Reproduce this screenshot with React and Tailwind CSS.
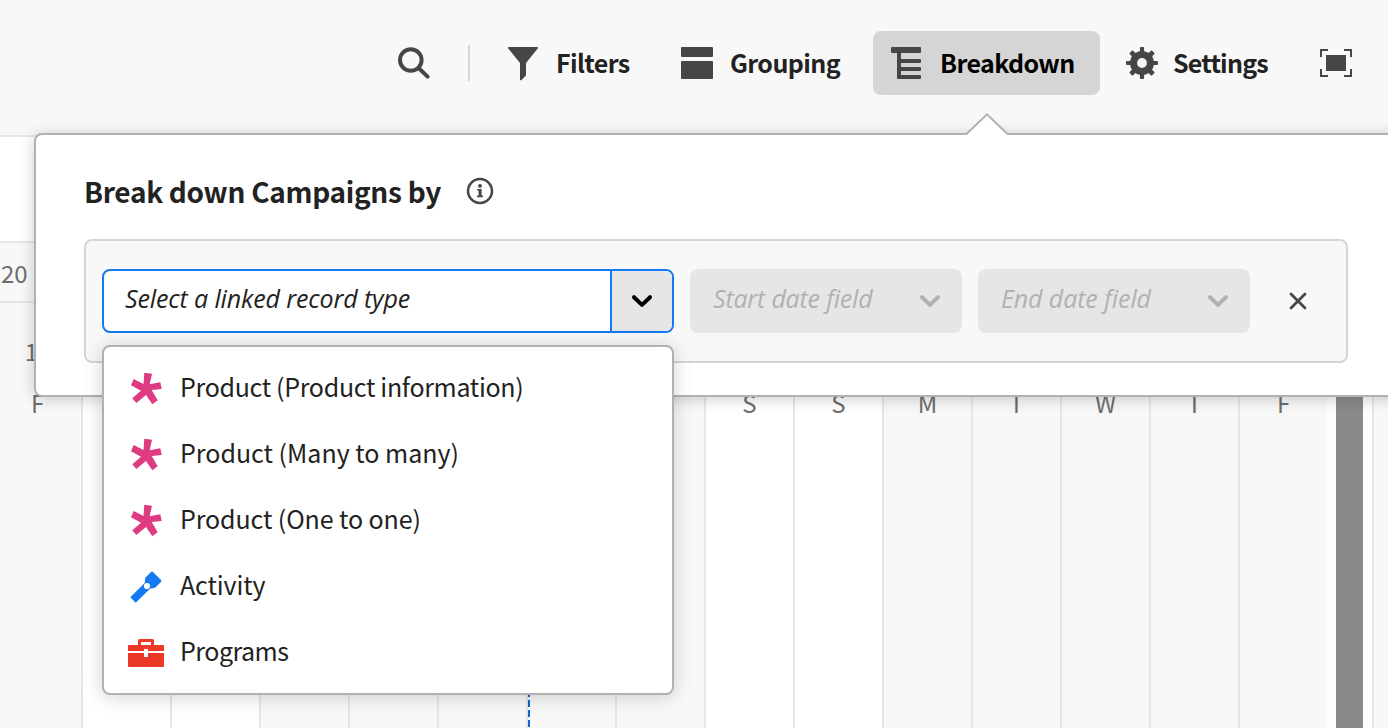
import React from "react";

const SANS = "font-['Noto_Sans_CJK_SC',sans-serif]";
const ITALIC = "font-['Open_Sans',sans-serif] italic";

const days = [
  { d: "F", n: "1" },
  { off: true },
  { off: true },
  {},
  {},
  {},
  { today: true },
  {},
  { d: "S", off: true },
  { d: "S", off: true },
  { d: "M" },
  { d: "T" },
  { d: "W" },
  { d: "T" },
  { d: "F" },
];

function SearchIcon() {
  return (
    <svg width="36" height="36" viewBox="0 0 36 36" fill="none" stroke="#464646" strokeWidth="4" strokeLinecap="round">
      <circle cx="14.8" cy="15" r="10.8" />
      <path d="M22.8 23.2 31.6 31.6" />
    </svg>
  );
}

function FilterIcon() {
  return (
    <svg width="36" height="36" viewBox="0 0 36 36" fill="#464646">
      <path d="M3.7 2H32.3a.8.8 0 0 1 .6 1.3L21 18v12.6l-4.2 4.1a.7.7 0 0 1-1.8-.6V18L3.1 3.3A.8.8 0 0 1 3.7 2Z" />
    </svg>
  );
}

function GroupingIcon() {
  return (
    <svg width="36" height="36" viewBox="0 0 36 36" fill="#464646">
      <rect x="2" y="2" width="32" height="10" rx="1" />
      <rect x="2" y="16" width="32" height="18" rx="1" />
    </svg>
  );
}

function BreakdownIcon() {
  return (
    <svg width="36" height="36" viewBox="0 0 36 36" fill="#464646">
      <rect x="2" y="2" width="30" height="6" rx="1" />
      <path d="M8 7h4v7h19a1 1 0 0 1 1 1v2a1 1 0 0 1-1 1H12v4h19a1 1 0 0 1 1 1v2a1 1 0 0 1-1 1H12v4h19a1 1 0 0 1 1 1v2a1 1 0 0 1-1 1H9a1 1 0 0 1-1-1Z" />
    </svg>
  );
}

function GearIcon() {
  return (
    <svg width="36" height="36" viewBox="0 0 36 36" fill="#464646">
      {[0, 45, 90, 135].map((a) => (
        <rect key={a} x={a % 90 ? 15.6 : 15.9} y={a % 90 ? 2.2 : 2} width={a % 90 ? 4.8 : 4.2} height={a % 90 ? 31.6 : 32} rx="1" transform={`rotate(${a} 18 18)`} />
      ))}
      <circle cx="18" cy="18" r="12" />
      <circle cx="18" cy="18" r="4.9" fill="#f8f8f8" />
    </svg>
  );
}

function FullscreenIcon() {
  return (
    <svg width="36" height="36" viewBox="0 0 36 36">
      <rect x="8" y="10" width="20" height="16" fill="#464646" />
      <path d="M10 5H3v7M26 5h7v7M10 31H3v-7M26 31h7v-7" fill="none" stroke="#464646" strokeWidth="2" />
    </svg>
  );
}

function InfoIcon() {
  return (
    <svg width="28" height="28" viewBox="0 0 28 28" fill="#464646">
      <circle cx="14" cy="14" r="12" fill="none" stroke="#464646" strokeWidth="2.5" />
      <circle cx="14" cy="8.9" r="1.9" />
      <path d="M11.400 12h4.200v6.500h1.300v1.800h-5.800v-1.800h1.500v-4.700h-1.200Z" />
    </svg>
  );
}

function Chevron({ color }) {
  return (
    <svg width="24" height="16" viewBox="0 0 24 16" fill="none" stroke={color} strokeWidth="4" strokeLinecap="round" strokeLinejoin="round">
      <path d="M4 4.2 12 11.9 20 4.2" />
    </svg>
  );
}

function Asterisk() {
  return (
    <svg width="36" height="36" viewBox="0 0 36 36" fill="#df3b82">
      <path d="M16.3 2.700 24 3.700 21.700 14.300 32.300 12.300 33.700 19 23.700 20 29.700 30.300 24.300 34.300 18 25 8.300 33 4.300 28.300 13 20.800 3 15.300 5.700 9 15.500 13.900Z" />
    </svg>
  );
}

function Flashlight() {
  return (
    <svg width="36" height="36" viewBox="0 0 36 36">
      <path d="M2.3 29.3 16.7 15 17.3 9.7 23 3.9Q24 3 25 3.9L33 12Q34 13 33 14L27 19.7 22 20.7 7.7 34.7Z" fill="#147af3" />
      <circle cx="19" cy="18" r="3.1" fill="#fff" />
    </svg>
  );
}

function Toolbox() {
  return (
    <svg width="36" height="36" viewBox="0 0 36 36" fill="#ec3829">
      <path d="M10 11V6.5A1.5 1.5 0 0 1 11.5 5h13A1.5 1.5 0 0 1 26 6.5V11h-3V8H13v3Z" />
      <path d="M1 11h34a1 1 0 0 1 1 1v5H20v-2h-4v2H0v-5a1 1 0 0 1 1-1ZM0 19h16v4h4v-4h16v13a1 1 0 0 1-1 1H1a1 1 0 0 1-1-1Z" />
    </svg>
  );
}

const options = [
  { label: "Product (Product information)", Icon: Asterisk, track: "tracking-[-0.31px]" },
  { label: "Product (Many to many)", Icon: Asterisk, track: "tracking-[0px]" },
  { label: "Product (One to one)", Icon: Asterisk, track: "tracking-[-0.1px]" },
  { label: "Activity", Icon: Flashlight, track: "tracking-[-0.12px]" },
  { label: "Programs", Icon: Toolbox, track: "tracking-[-0.5px]" },
];

function Toolbar() {
  const label = "-mt-[2px] ml-[15px] whitespace-nowrap text-[25px] font-bold leading-[36px]";
  return (
    <header className="flex h-[135px] items-start bg-[#f8f8f8] pt-[31px] text-[#222]">
      <div className="flex h-16 w-full items-center pl-[396px]">
        <SearchIcon />
        <div className="ml-[36px] h-9 w-[2px] bg-[#d5d5d5]" />
        <div className="ml-[35px] flex w-[174px] items-center">
          <FilterIcon />
          <span className={`${label} tracking-[-0.6px]`}>Filters</span>
        </div>
        <div className="flex w-[194px] items-center">
          <GroupingIcon />
          <span className={`${label} tracking-[-0.6px]`}>Grouping</span>
        </div>
        <div className="flex h-16 w-[227px] items-center rounded-lg bg-[#d5d5d5] pl-[16px] text-black">
          <BreakdownIcon />
          <span className={`${label} tracking-[-0.6px]`}>Breakdown</span>
        </div>
        <div className="ml-[24px] flex w-[194px] items-center">
          <GearIcon />
          <span className="-mt-[2px] ml-[13px] whitespace-nowrap text-[25px] font-bold leading-[36px] tracking-[-0.8px]">Settings</span>
        </div>
        <FullscreenIcon />
      </div>
    </header>
  );
}

function Timeline() {
  return (
    <main className="flex h-[593px] flex-col bg-[#f8f8f8] text-[#6e6e6e]">
      <div className="h-[108px] border-y-2 border-[#e6e6e6] bg-white" />
      <div className="flex h-[60px] items-center border-b-2 border-[#e6e6e6] pl-[1px] pt-[2px] text-[24px]">20</div>
      <div className="flex flex-1">
        <div className="-ml-[8px] flex flex-none">
          {days.map((c, i) => (
            <div
              key={i}
              className={`flex w-[89px] flex-none border-l-2 border-[#e6e6e6] ${c.off ? "bg-white" : "bg-[#f8f8f8]"}`}
            >
              {c.today && (
                <div className="h-full w-[2px] flex-none bg-[repeating-linear-gradient(to_bottom,#0d66d0_0px,#0d66d0_7px,transparent_7px,transparent_10px)] bg-[position:0px_7px]" />
              )}
              <div className="flex flex-1 flex-col items-center pt-[33px] text-[24px] leading-[30px]">
                <span className="h-[52px] -ml-[12px]">{c.n}</span>
                <span>{c.d}</span>
              </div>
            </div>
          ))}
        </div>
        <div className="w-[9px] flex-none bg-[#fdfdfd]" />
        <div className="w-[27px] flex-none bg-[#8a8a8a]" />
        <div className="w-[9px] flex-none bg-[#fdfdfd]" />
        <div className="flex-1 border-l-2 border-[#e6e6e6]" />
      </div>
    </main>
  );
}

function DateSelect({ children, track }) {
  return (
    <div className={`flex h-16 w-[272px] items-center justify-between rounded-lg bg-[#e6e6e6] pl-[23px] pr-[20px] text-[#b1b1b1] ${ITALIC}`}>
      <span className={`-mt-[4px] whitespace-nowrap text-[25px] ${track}`}>{children}</span>
      <Chevron color="#b1b1b1" />
    </div>
  );
}

function Popover() {
  return (
    <section className="absolute left-[34px] top-[133px] h-[264px] w-[1380px] rounded-lg border-2 border-[#b1b1b1] bg-white pl-[48px] shadow-[0_2px_16px_rgba(0,0,0,0.2)]">
      <svg className="absolute left-[929px] top-[-22px]" width="44" height="23" viewBox="0 0 44 23">
        <path d="M0 23 1.5 21.5 22 1.4 42.5 21.5 44 23Z" fill="#fff" />
        <path d="M1 21.5 22 1.4 43 21.5" fill="none" stroke="#b1b1b1" strokeWidth="2" />
      </svg>
      <div className="flex h-[104px] items-center pt-[8px]">
        <h2 className="w-[382px] whitespace-nowrap text-[28px] font-bold tracking-[-0.3px] text-[#222]">Break down Campaigns by</h2>
        <InfoIcon />
      </div>
      <div className="flex h-[124px] w-[1264px] items-center gap-[16px] rounded-lg border-2 border-[#d5d5d5] bg-[#f8f8f8] pl-[16px]">
        <div className="flex h-16 w-[572px] overflow-hidden rounded-lg border-2 border-[#147af3] bg-white">
          <div className={`flex flex-1 items-center pl-[21px] text-[25px] text-[#222] ${ITALIC}`}>
            <span className="-mt-[4px] whitespace-nowrap tracking-[-0.12px]">Select a linked record type</span>
          </div>
          <div className="flex w-[62px] items-center justify-center border-l-2 border-[#147af3] bg-[#e6e6e6]">
            <Chevron color="#000" />
          </div>
        </div>
        <DateSelect track="tracking-[-0.2px]">Start date field</DateSelect>
        <DateSelect track="tracking-[-0.1px]">End date field</DateSelect>
        <svg className="ml-[22px]" width="20" height="20" viewBox="0 0 20 20" fill="none" stroke="#464646" strokeWidth="2.8" strokeLinecap="round">
          <path d="M3 3 17 17M17 3 3 17" />
        </svg>
      </div>
    </section>
  );
}

function OptionMenu() {
  return (
    <ul className="absolute left-[102px] top-[345px] h-[350px] w-[572px] rounded-lg border-2 border-[#b1b1b1] bg-white py-2 shadow-[0_2px_20px_rgba(0,0,0,0.18)]">
      {options.map(({ label, Icon, track }) => (
        <li key={label} className="flex h-[66px] items-center gap-[16px] pl-[24px] text-[25px] text-[#222]">
          <Icon />
          <span className={`-mt-[2px] whitespace-nowrap ${track}`}>{label}</span>
        </li>
      ))}
    </ul>
  );
}

export default function App() {
  return (
    <div className={`relative h-[728px] w-[1388px] overflow-hidden bg-[#f8f8f8] ${SANS}`}>
      <Toolbar />
      <Timeline />
      <Popover />
      <OptionMenu />
    </div>
  );
}
